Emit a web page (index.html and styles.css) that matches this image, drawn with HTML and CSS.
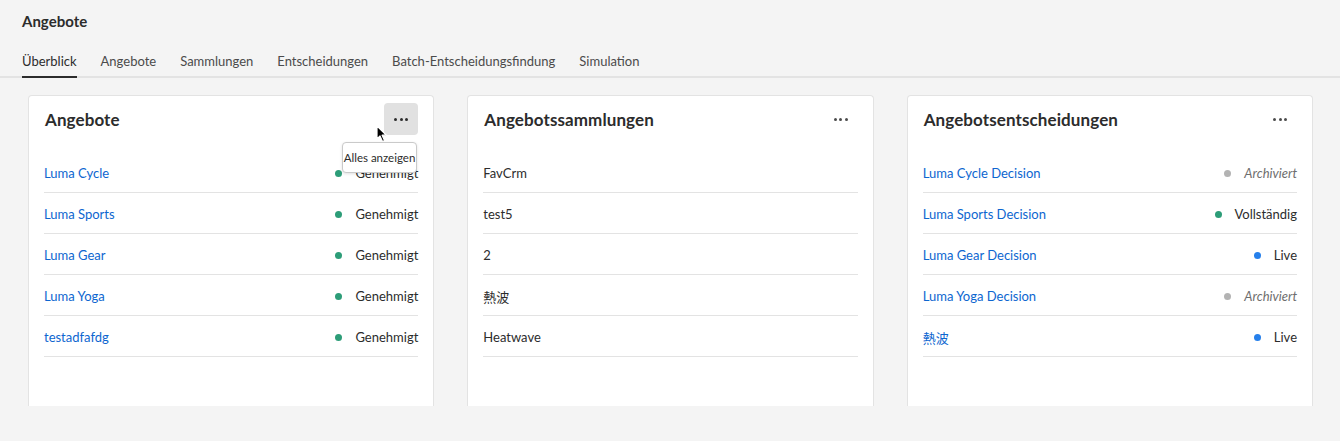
FILE: index.html
```html
<!DOCTYPE html>
<html lang="de">
<head>
<meta charset="utf-8">
<title>Angebote</title>
<link rel="stylesheet" href="styles.css">
</head>
<body>
<header class="page-header">
  <h1 class="page-title">Angebote</h1>
  <nav class="tabs">
    <a class="tab is-selected">Überblick</a>
    <a class="tab">Angebote</a>
    <a class="tab">Sammlungen</a>
    <a class="tab">Entscheidungen</a>
    <a class="tab">Batch-Entscheidungsfindung</a>
    <a class="tab">Simulation</a>
  </nav>
</header>
<main class="cards">
  <section class="card">
    <div class="card-head">
      <h2 class="card-title">Angebote</h2>
      <div class="more-wrap">
        <button class="more is-hover"><span></span><span></span><span></span></button>
        <svg class="cursor" width="12" height="18" viewBox="0 0 12 18"><path d="M1 1 L1 14 L4 11 L6.5 16.5 L8.5 15.6 L6.1 10.2 L10.2 10.2 Z" fill="#000" stroke="#fff" stroke-width="1.2" stroke-linejoin="round"/></svg>
        <div class="tooltip">Alles anzeigen</div>
      </div>
    </div>
    <ul class="list">
      <li class="row"><a class="link">Luma Cycle</a><span class="status"><i class="dot green"></i>Genehmigt</span></li>
      <li class="row"><a class="link">Luma Sports</a><span class="status"><i class="dot green"></i>Genehmigt</span></li>
      <li class="row"><a class="link">Luma Gear</a><span class="status"><i class="dot green"></i>Genehmigt</span></li>
      <li class="row"><a class="link">Luma Yoga</a><span class="status"><i class="dot green"></i>Genehmigt</span></li>
      <li class="row"><a class="link">testadfafdg</a><span class="status"><i class="dot green"></i>Genehmigt</span></li>
    </ul>
  </section>
  <section class="card">
    <div class="card-head">
      <h2 class="card-title">Angebotssammlungen</h2>
      <div class="more-wrap">
        <button class="more"><span></span><span></span><span></span></button>
      </div>
    </div>
    <ul class="list">
      <li class="row"><span class="plain">FavCrm</span></li>
      <li class="row"><span class="plain">test5</span></li>
      <li class="row"><span class="plain">2</span></li>
      <li class="row"><span class="plain">熱波</span></li>
      <li class="row"><span class="plain">Heatwave</span></li>
    </ul>
  </section>
  <section class="card">
    <div class="card-head">
      <h2 class="card-title">Angebotsentscheidungen</h2>
      <div class="more-wrap">
        <button class="more"><span></span><span></span><span></span></button>
      </div>
    </div>
    <ul class="list">
      <li class="row"><a class="link">Luma Cycle Decision</a><span class="status"><i class="dot gray"></i><em class="archived">Archiviert</em></span></li>
      <li class="row"><a class="link">Luma Sports Decision</a><span class="status"><i class="dot green"></i>Vollständig</span></li>
      <li class="row"><a class="link">Luma Gear Decision</a><span class="status"><i class="dot blue"></i>Live</span></li>
      <li class="row"><a class="link">Luma Yoga Decision</a><span class="status"><i class="dot gray"></i><em class="archived">Archiviert</em></span></li>
      <li class="row"><a class="link">熱波</a><span class="status"><i class="dot blue"></i>Live</span></li>
    </ul>
  </section>
</main>
</body>
</html>
```

FILE: styles.css
```css
* { box-sizing: border-box; }
html, body {
  margin: 0;
  padding: 0;
  background: #f4f4f4;
  font-family: Lato, "Noto Sans CJK JP", "Noto Sans", sans-serif;
  color: #2c2c2c;
  height: 441px;
  overflow: hidden;
}
.page-header {
  padding: 11px 0 0 0;
}
.page-title {
  margin: 0 0 0 22px;
  font-size: 15px;
  line-height: 20px;
  font-weight: 700;
  color: #2c2c2c;
}
.tabs {
  margin-top: 20px;
  display: flex;
  gap: 24px;
  padding-left: 22px;
  border-bottom: 2px solid #e3e3e3;
}
.tab {
  font-size: 13px;
  line-height: 20px;
  color: #4b4b4b;
  padding-bottom: 5px;
  border-bottom: 2px solid transparent;
  margin-bottom: -2px;
  cursor: pointer;
}
.tab.is-selected {
  color: #2c2c2c;
  border-bottom-color: #2c2c2c;
}
.cards {
  display: grid;
  grid-template-columns: repeat(3, 1fr);
  gap: 33px;
  padding: 17px 27px 0 28px;
}
.card {
  background: #fff;
  border: 1px solid #e3e3e3;
  border-bottom: none;
  border-radius: 4px 4px 0 0;
  height: 311px;
  padding: 7px 15px 0 15px;
}
.card-head {
  display: flex;
  align-items: center;
  justify-content: space-between;
  height: 32px;
}
.card-title {
  margin: 0 0 0 1px;
  font-size: 17px;
  font-weight: 700;
  color: #2c2c2c;
  letter-spacing: 0.1px;
}
.more-wrap {
  position: relative;
  width: 34px;
  height: 32px;
}
.more {
  width: 34px;
  height: 32px;
  border: none;
  border-radius: 4px;
  background: transparent;
  display: flex;
  align-items: center;
  justify-content: center;
  gap: 2.5px;
  padding: 0;
}
.more span {
  width: 3px;
  height: 3px;
  border-radius: 50%;
  background: #4b4b4b;
}
.more.is-hover { background: #e1e1e1; }
.more.is-hover span { background: #2c2c2c; }
.cursor {
  position: absolute;
  left: -8px;
  top: 22px;
}
.tooltip {
  position: absolute;
  top: 39px;
  right: 1px;
  background: #fff;
  border: 1px solid #cacaca;
  border-radius: 4px;
  font-size: 11.5px;
  line-height: 29px;
  padding: 0 1px;
  color: #2c2c2c;
  white-space: nowrap;
  box-shadow: 0 1px 3px rgba(0,0,0,0.12);
  z-index: 2;
}
.list {
  list-style: none;
  margin: 17px 0 0 0;
  padding: 0;
}
.row {
  display: flex;
  align-items: center;
  justify-content: space-between;
  height: 41px;
  padding-top: 2px;
  border-bottom: 1px solid #e3e3e3;
  font-size: 13px;
}
.link {
  color: #0d66d0;
  cursor: pointer;
}
.plain { color: #2c2c2c; }
.status {
  display: flex;
  align-items: center;
  color: #2c2c2c;
}
.dot {
  width: 7px;
  height: 7px;
  border-radius: 50%;
  margin-right: 13px;
  display: inline-block;
}
.dot.green { background: #2d9d78; }
.dot.gray { background: #b3b3b3; }
.dot.blue { background: #2680eb; }
.archived {
  color: #6e6e6e;
  font-style: italic;
}
```
